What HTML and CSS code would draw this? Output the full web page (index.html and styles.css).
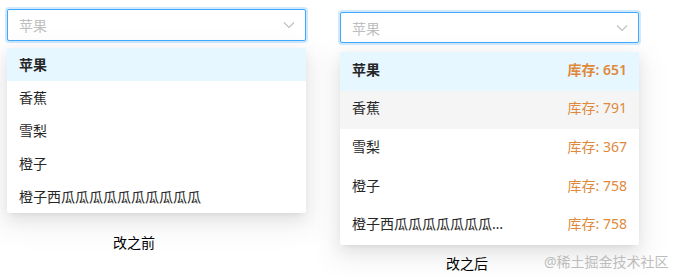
FILE: index.html
```html
<!DOCTYPE html>
<html lang="zh-CN">
<head>
    <meta charset="UTF-8">
    <title>Select 改之前 / 改之后</title>
    <link rel="stylesheet" href="styles.css">
</head>
<body>
    <div class="page">
        <div class="demo demo-before">
            <div class="select">
                <span class="placeholder">苹果</span>
                <svg class="arrow" width="12" height="8" viewBox="0 0 12 8"><path d="M1 1.5 L6 6.5 L11 1.5" fill="none" stroke="#bfbfbf" stroke-width="1.1"/></svg>
            </div>
            <ul class="dropdown">
                <li class="active">苹果</li>
                <li>香蕉</li>
                <li>雪梨</li>
                <li>橙子</li>
                <li>橙子西瓜瓜瓜瓜瓜瓜瓜瓜瓜瓜</li>
            </ul>
            <div class="caption">改之前</div>
        </div>

        <div class="demo demo-after">
            <div class="select">
                <span class="placeholder">苹果</span>
                <svg class="arrow" width="12" height="8" viewBox="0 0 12 8"><path d="M1 1.5 L6 6.5 L11 1.5" fill="none" stroke="#bfbfbf" stroke-width="1.1"/></svg>
            </div>
            <ul class="dropdown">
                <li class="active"><span class="name">苹果</span><span class="stock">库存: 651</span></li>
                <li class="hover"><span class="name">香蕉</span><span class="stock">库存: 791</span></li>
                <li><span class="name">雪梨</span><span class="stock">库存: 367</span></li>
                <li><span class="name">橙子</span><span class="stock">库存: 758</span></li>
                <li><span class="name">橙子西瓜瓜瓜瓜瓜瓜瓜瓜瓜瓜</span><span class="stock">库存: 758</span></li>
            </ul>
            <div class="caption">改之后</div>
        </div>
    </div>

    <div class="watermark">@稀土掘金技术社区</div>
</body>
</html>
```

FILE: styles.css
```css
body {
    margin: 0;
    background-color: #ffffff;
    font-family: "Noto Sans", "Noto Sans CJK SC", sans-serif;
    font-size: 14px;
    color: #262626;
}
.page {
    display: flex;
    align-items: flex-start;
    gap: 34px;
    padding-left: 7px;
}
.demo {
    width: 299px;
}
.demo-before {
    margin-top: 9px;
}
.demo-after {
    margin-top: 12px;
}
.select {
    display: flex;
    align-items: center;
    justify-content: space-between;
    box-sizing: border-box;
    height: 32px;
    padding: 0 10px 0 11px;
    border: 1px solid #40a9ff;
    border-radius: 2px;
    box-shadow: 0 0 0 2px rgba(24, 144, 255, 0.2);
    background-color: #fff;
}
.demo-after .select {
    height: 31px;
}
.placeholder {
    color: #bfbfbf;
    font-size: 14px;
}
.dropdown {
    list-style: none;
    margin: 7px 0 0;
    padding: 0;
    background-color: #fff;
    border-radius: 2px;
    box-shadow: 0 3px 6px -4px rgba(0, 0, 0, 0.12), 0 6px 16px 0 rgba(0, 0, 0, 0.08), 0 9px 28px 8px rgba(0, 0, 0, 0.05);
}
.dropdown li {
    display: flex;
    align-items: center;
    justify-content: space-between;
    height: 33px;
    padding: 0 12px;
    line-height: 22px;
    white-space: nowrap;
}
.dropdown li.active {
    background-color: #e6f7ff;
    font-weight: 600;
}
.dropdown li.hover {
    background-color: #f5f5f5;
}
.demo-after .dropdown {
    margin-top: 9px;
}
.demo-after .dropdown li {
    height: 38.6px;
    padding-bottom: 3px;
    box-sizing: border-box;
}
.name {
    max-width: 156px;
    overflow: hidden;
    text-overflow: ellipsis;
}
.stock {
    color: #e0893b;
}
.caption {
    margin-left: 106px;
    line-height: 22px;
    color: #000;
}
.demo-before .caption {
    margin-top: 19px;
}
.demo-after .caption {
    margin-top: 8px;
}
.watermark {
    position: absolute;
    left: 544px;
    top: 252px;
    color: #bdbdbd;
    font-size: 14px;
    line-height: 20px;
}
```
